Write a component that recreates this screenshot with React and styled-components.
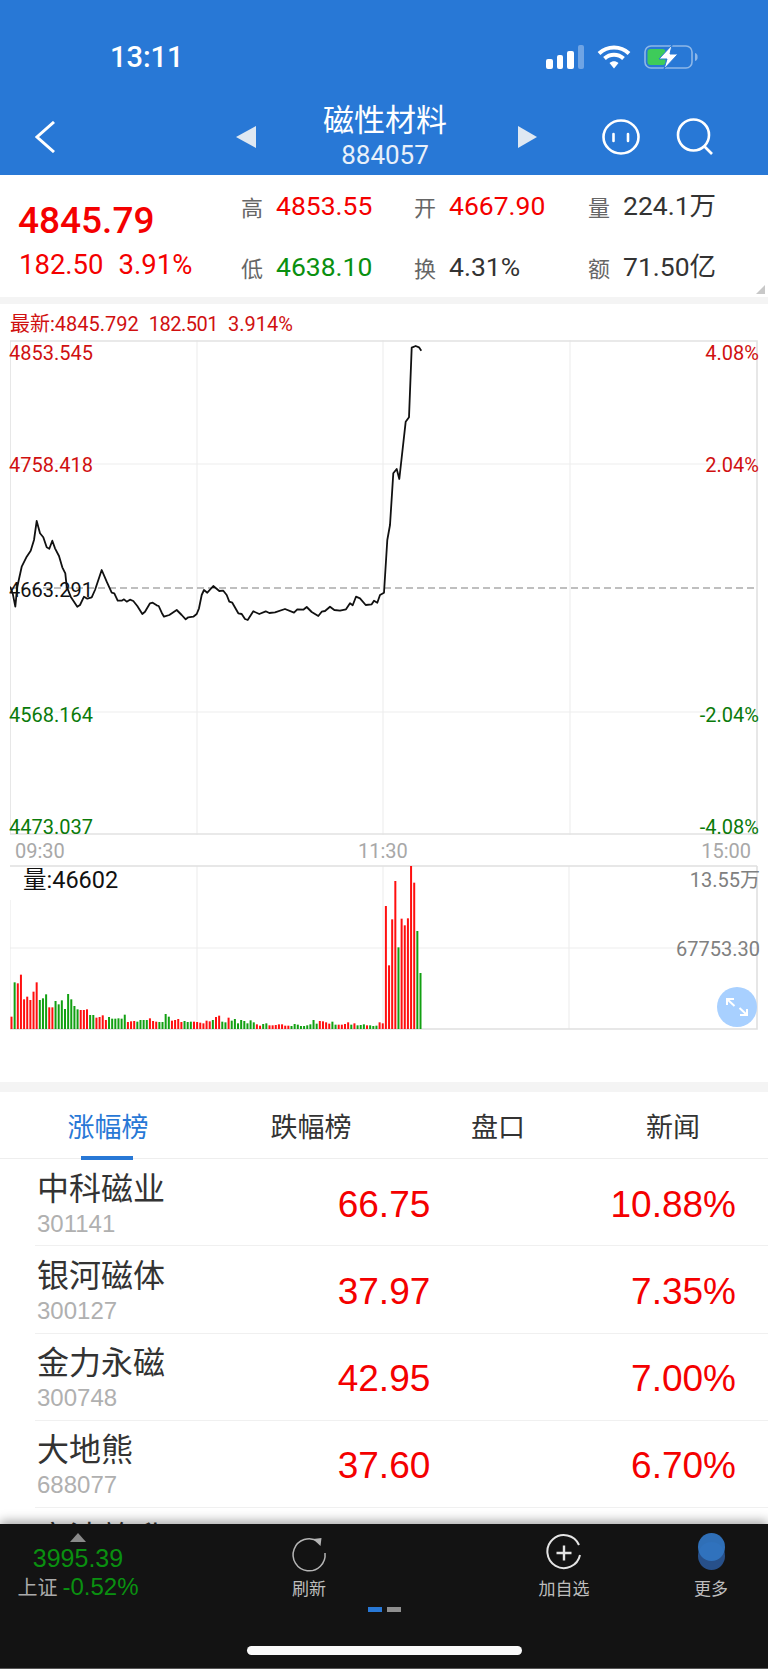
import React from "react";
import styled, { createGlobalStyle } from "styled-components";

const CJK = '"Noto Sans CJK SC", sans-serif';
const DIN = `Roboto, ${CJK}`;
const HELV = `"Liberation Sans", ${CJK}`;
const BLUE = "#2878d6";
const RED = "#f40000";
const GREEN = "#0a9010";

const LINE = [
  [30, 830], [38, 850], [46, 890], [52, 830], [65, 770], [80, 740], [92, 722], [102, 690], [110, 633], [120, 670],
  [130, 682], [140, 712], [148, 716], [157, 692], [165, 715], [177, 738], [187, 772], [196, 790], [200, 830], [212, 860],
  [232, 890], [240, 885], [252, 860], [262, 866], [275, 862], [285, 840], [305, 780], [320, 815], [335, 848], [343, 850],
  [353, 872], [365, 872], [372, 868], [380, 875], [390, 869], [400, 873], [412, 888], [427, 912], [435, 905], [450, 880],
  [458, 878], [470, 886], [476, 888], [485, 908], [492, 920], [508, 915], [530, 900], [545, 915], [557, 928], [565, 922],
  [580, 920], [590, 912], [597, 895], [605, 855], [612, 840], [622, 848], [640, 828], [658, 843], [670, 842], [680, 855],
  [688, 875], [697, 878], [715, 910], [725, 912], [735, 927], [743, 930], [760, 904], [778, 912], [797, 904], [808, 909],
  [825, 907], [855, 897], [882, 908], [892, 898], [910, 899], [920, 891], [935, 906], [955, 918], [965, 905], [975, 903],
  [990, 890], [1003, 900], [1020, 902], [1038, 898], [1050, 880], [1058, 886], [1068, 860], [1080, 865], [1097, 885], [1115, 883],
  [1122, 872], [1132, 878], [1140, 855], [1152, 848], [1162, 690], [1170, 645], [1180, 490], [1190, 477], [1198, 507], [1217, 335],
  [1227, 322], [1235, 113], [1247, 108], [1257, 112], [1264, 122],
]
  .map(([x, y]) => `${(x / 3).toFixed(1)},${(310 + y / 3).toFixed(1)}`)
  .join(" ");

// bar tops read off the reference, negative = green
const VOLUME = [
  590, -487, 490, 464, 538, 530, 540, 515, 487, -540, -535, -523, 562, 562, -543, -553, -541, -567, -522, -538, -558,
  -568, 570, 570, 568, -585, -585, 593, 591, 586, 600, -591, -596, -596, -595, -596, -584, 606, 604, 603, -605, -600,
  -600, -600, 595, 603, 605, -606, -606, -582, -590, 602, 600, 597, 606, -603, -606, -605, 605, 606, 608, 610, 602,
  604, -600, 591, 587, -605, -607, 593, -602, -597, -610, -600, -603, -610, -601, -607, 613, 617, -612, -610, 616, 616,
  615, 613, 613, 617, 617, -618, -612, -614, -618, -618, -616, -613, -600, -611, 603, 604, 607, 611, -605, -614, 614,
  614, 612, 607, -614, 610, -616, -615, -613, 616, -616, -618, -617, 607, 610,
  258, 436, 298, 183, -382, 296, 316, 295, 138, 188, -333, -459,
];

const STOCKS = [
  { name: "中科磁业", code: "301141", price: "66.75", pct: "10.88%" },
  { name: "银河磁体", code: "300127", price: "37.97", pct: "7.35%" },
  { name: "金力永磁", code: "300748", price: "42.95", pct: "7.00%" },
  { name: "大地熊", code: "688077", price: "37.60", pct: "6.70%" },
  { name: "宁波韵升", code: "600366", price: "12.45", pct: "6.41%" },
];

const App = () => (
  <Page>
    <GlobalStyle />
    <Header>
      <StatusBar>
        <Time>13:11</Time>
        <StatusIcons>
          <Signal>
            <SignalBar $h={10} />
            <SignalBar $h={14} />
            <SignalBar $h={18} />
            <SignalBar $h={24} $off />
          </Signal>
          <svg width="34" height="24" viewBox="0 0 34 24">
            <path d="M2 8.5C10.5 0.5 23.5 0.5 32 8.5" fill="none" stroke="#fff" strokeWidth="4" />
            <path d="M7.5 13.5C13 8.5 21 8.5 26.5 13.5" fill="none" stroke="#fff" strokeWidth="4" />
            <path d="M12.5 18C15.5 15.6 18.5 15.6 21.5 18L17 23.5Z" fill="#fff" />
          </svg>
          <svg width="54" height="24" viewBox="0 0 54 24">
            <rect x="1" y="1" width="47" height="22" rx="6" fill="none" stroke="#8db7e8" strokeWidth="1.6" />
            <rect x="3.5" y="4" width="18" height="16" rx="3" fill="#3ecb5a" />
            <path d="M51 8c2 .5 2.6 2 2.6 4s-.6 3.500-2.600 4z" fill="#8db7e8" />
            <path d="M28 0 15 14h8l-3 10 14-15h-8z" fill="#fff" stroke={BLUE} strokeWidth="1" />
          </svg>
        </StatusIcons>
      </StatusBar>
      <NavBar>
        <svg width="20" height="32" viewBox="0 0 20 32">
          <path d="M19 1 2 16l17 15" fill="none" stroke="#fff" strokeWidth="3" />
        </svg>
        <Arrow $left />
        <TitleBlock>
          <Title>磁性材料</Title>
          <Code>884057</Code>
        </TitleBlock>
        <Arrow />
        <FaceIcon width="38" height="36" viewBox="0 0 38 36">
          <ellipse cx="19" cy="18" rx="17.500" ry="16.500" fill="none" stroke="#fff" strokeWidth="2.600" />
          <path d="M11.500 15v7M26 15v7" stroke="#fff" strokeWidth="2.600" strokeLinecap="round" />
        </FaceIcon>
        <SearchIcon width="38" height="38" viewBox="0 0 38 38">
          <circle cx="17.500" cy="17" r="15.500" fill="none" stroke="#fff" strokeWidth="2.600" />
          <path d="M28 28l8 8" stroke="#fff" strokeWidth="2.600" />
        </SearchIcon>
      </NavBar>
    </Header>

    <Quote>
      <LastPrice>
        <Big>4845.79</Big>
        <Change>
          <span>182.50</span>
          <span>3.91%</span>
        </Change>
      </LastPrice>
      <Stats>
        <Stat label="高" value="4853.55" color={RED} />
        <Stat label="开" value="4667.90" color={RED} />
        <Stat label="量" value="224.1万" color="#333" />
        <Stat label="低" value="4638.10" color={GREEN} />
        <Stat label="换" value="4.31%" color="#333" />
        <Stat label="额" value="71.50亿" color="#333" />
      </Stats>
      <CornerMark />
    </Quote>
    <Band $h={7} />

    <ChartHeader>
      <span>最新:4845.792</span>
      <span>182.501</span>
      <span>3.914%</span>
    </ChartHeader>

    <PriceChart>
      <svg width="748" height="495" viewBox="10 340 748 495">
        <path d="M197 340V835M383 340V835M570 340V835M10 464H758M10 712H758" stroke="#eeeeee" strokeWidth="1.200" fill="none" />
        <path d="M10 341H757V834H10Z" stroke="#e2e2e2" strokeWidth="1.600" fill="none" />
        <path d="M10 588H758" stroke="#aaaaaa" strokeWidth="1.400" strokeDasharray="7 4" />
        <polyline points={LINE} fill="none" stroke="#111" strokeWidth="1.800" strokeLinejoin="round" />
      </svg>
      <AxisLabel $top={1} $color="#d01010">4853.545</AxisLabel>
      <AxisLabel $top={113} $color="#d01010">4758.418</AxisLabel>
      <AxisLabel $top={238} $color="#111">4663.291</AxisLabel>
      <AxisLabel $top={363} $color="#0a7a0a">4568.164</AxisLabel>
      <AxisLabel $top={475} $color="#0a7a0a">4473.037</AxisLabel>
      <AxisLabel $right $top={1} $color="#d01010">4.08%</AxisLabel>
      <AxisLabel $right $top={113} $color="#d01010">2.04%</AxisLabel>
      <AxisLabel $right $top={363} $color="#0a7a0a">-2.04%</AxisLabel>
      <AxisLabel $right $top={475} $color="#0a7a0a">-4.08%</AxisLabel>
    </PriceChart>

    <TimeAxis>
      <span>09:30</span>
      <MidTime>11:30</MidTime>
      <span>15:00</span>
    </TimeAxis>

    <VolumeChart>
      <svg width="748" height="165" viewBox="10 865 748 165">
        <path d="M197 866V1029M383 866V1029M569 866V1029M10 948H758" stroke="#eeeeee" strokeWidth="1.200" fill="none" />
        <path d="M757 866H10M757 866V1029H10" stroke="#e0e0e0" strokeWidth="1.600" fill="none" />
        <path d="M10 900V1029" stroke="#e8e8e8" strokeWidth="1" />
        {VOLUME.map((v, i) => {
          const top = 820 + Math.abs(v) / 3;
          return (
            <rect
              key={i}
              x={10.500 + (i * 409) / (VOLUME.length - 1)}
              y={top}
              width="2"
              height={1029 - top}
              fill={v < 0 ? "#12a012" : "#ff0f0f"}
            />
          );
        })}
      </svg>
      <VolumeTitle>量:46602</VolumeTitle>
      <VolumeLabel $top={3}>13.55万</VolumeLabel>
      <VolumeLabel $top={72}>67753.30</VolumeLabel>
      <ExpandButton>
        <svg width="26" height="26" viewBox="0 0 26 26">
          <path d="M3 11V5h7M3.500 5.500l7 6.500M23 15v6h-7M22.500 20.500l-7-6.500" fill="none" stroke="#fff" strokeWidth="2" />
        </svg>
      </ExpandButton>
    </VolumeChart>

    <Band $h={10} $top={52} />

    <Tabs>
      <Tab $active>
        <TabText $active>涨幅榜</TabText>
      </Tab>
      <Tab>
        <TabText>跌幅榜</TabText>
      </Tab>
      <Tab>
        <TabText>盘口</TabText>
      </Tab>
      <Tab>
        <TabText>新闻</TabText>
      </Tab>
    </Tabs>

    <List>
      {STOCKS.map((s) => (
        <Row key={s.code}>
          <div>
            <StockName>{s.name}</StockName>
            <StockCode>{s.code}</StockCode>
          </div>
          <Price>{s.price}</Price>
          <Pct>{s.pct}</Pct>
        </Row>
      ))}
    </List>

    <Footer>
      <ToolRow>
        <Market>
          <UpMark />
          <IndexPrice>3995.39</IndexPrice>
          <IndexRow>
            <IndexName>上证</IndexName>
            <IndexValue>-0.52%</IndexValue>
          </IndexRow>
        </Market>
        <Tool>
          <svg width="40" height="40" viewBox="0 0 40 40">
            <path d="M29 8.500A16 16 0 1 0 36 20" fill="none" stroke="#b5b5b5" strokeWidth="1.500" />
            <path d="M24 6l8.500-1-1 8z" fill="#b5b5b5" />
          </svg>
          <ToolLabel>刷新</ToolLabel>
        </Tool>
        <Tool>
          <svg width="40" height="40" viewBox="0 0 40 40">
            <path d="M36 22A16.500 16.500 0 1 1 35 12" fill="none" stroke="#e4e4e4" strokeWidth="2" />
            <path d="M20 12.500v15M12.500 20h15" stroke="#e4e4e4" strokeWidth="2.400" />
          </svg>
          <ToolLabel>加自选</ToolLabel>
        </Tool>
        <Tool>
          <MoreIcon />
          <ToolLabel>更多</ToolLabel>
        </Tool>
      </ToolRow>
      <Dots>
        <Dot $active />
        <Dot />
      </Dots>
      <HomeBar />
    </Footer>
  </Page>
);

const Stat = ({ label, value, color }) => (
  <StatCell>
    <StatLabel>{label}</StatLabel>
    <StatValue $color={color}>{value}</StatValue>
  </StatCell>
);

const GlobalStyle = createGlobalStyle`
  html, body {
    margin: 0;
    padding: 0;
    background: #fff;
  }
  * {
    box-sizing: border-box;
  }
  svg {
    display: block;
  }
`;

const Page = styled.div`
  width: 768px;
  height: 1669px;
  display: flex;
  flex-direction: column;
  overflow: hidden;
  font-family: ${DIN};
  background: #fff;
`;

const Header = styled.header`
  height: 175px;
  flex: none;
  background: ${BLUE};
  color: #fff;
`;

const StatusBar = styled.div`
  height: 90px;
  display: flex;
  align-items: center;
  justify-content: space-between;
  padding: 23px 70px 0 110px;
`;

const Time = styled.div`
  font-size: 29px;
  font-weight: 500;
  line-height: 30px;
`;

const StatusIcons = styled.div`
  display: flex;
  align-items: center;
  gap: 13px;
`;

const Signal = styled.div`
  display: flex;
  align-items: flex-end;
  gap: 4px;
  height: 24px;
`;

const SignalBar = styled.i`
  width: 6.500px;
  height: ${(p) => p.$h}px;
  border-radius: 2px;
  background: ${(p) => (p.$off ? "#6fa4e4" : "#fff")};
`;

const NavBar = styled.div`
  height: 85px;
  display: flex;
  align-items: center;
  padding: 9px 0 0 35px;
`;

const Arrow = styled.i`
  width: 0;
  height: 0;
  margin-left: ${(p) => (p.$left ? "181px" : "0")};
  border-top: 11px solid transparent;
  border-bottom: 11px solid transparent;
  ${(p) =>
    p.$left
      ? "border-right: 20px solid #dfe8f2;"
      : "border-left: 19px solid #dfe8f2;"}
`;

const TitleBlock = styled.div`
  width: 262px;
  margin-top: -6px;
  padding-right: 4px;
  display: flex;
  flex-direction: column;
  align-items: center;
`;

const Title = styled.div`
  font-family: ${CJK};
  font-size: 31px;
  line-height: 38px;
`;

const Code = styled.div`
  margin-top: 3px;
  font-size: 26px;
  line-height: 30px;
  color: #e8f0fa;
`;

const FaceIcon = styled.svg`
  margin-left: 65px;
`;

const SearchIcon = styled.svg`
  margin-left: 36px;
`;

const Quote = styled.section`
  height: 122px;
  flex: none;
  position: relative;
  display: flex;
  padding-left: 18px;
`;

const LastPrice = styled.div`
  width: 223px;
  padding-top: 25px;
  color: ${RED};
`;

const Big = styled.div`
  font-size: 37px;
  font-weight: 500;
  line-height: 42px;
  color: ${RED};
`;

const Change = styled.div`
  display: flex;
  gap: 15px;
  margin-top: 7px;
  padding-left: 1px;
  font-size: 27.500px;
  line-height: 32px;
`;

const Stats = styled.div`
  display: grid;
  grid-template-columns: 173px 174px auto;
  grid-auto-rows: 61px;
  padding-top: 12px;
`;

const StatCell = styled.div`
  display: flex;
  align-items: flex-start;
  gap: 13px;
`;

const StatLabel = styled.span`
  font-family: ${CJK};
  font-size: 22px;
  line-height: 38px;
  color: #666;
`;

const StatValue = styled.span`
  font-size: 26.500px;
  line-height: 38px;
  color: ${(p) => p.$color};
`;

const CornerMark = styled.i`
  position: absolute;
  right: 3px;
  bottom: 3px;
  width: 0;
  height: 0;
  border-left: 9px solid transparent;
  border-bottom: 9px solid #c8c8c8;
`;

const Band = styled.div`
  height: ${(p) => p.$h}px;
  flex: none;
  margin-top: ${(p) => p.$top || 0}px;
  background: #f4f4f4;
`;

const ChartHeader = styled.div`
  height: 36px;
  flex: none;
  display: flex;
  gap: 10px;
  padding: 8px 0 0 10px;
  font-size: 20px;
  line-height: 24px;
  color: #d01010;

  span:nth-child(2) {
    letter-spacing: -0.5px;
  }
`;

const PriceChart = styled.div`
  position: relative;
  width: 748px;
  height: 495px;
  flex: none;
  margin-left: 10px;
`;

const AxisLabel = styled.span`
  position: absolute;
  top: ${(p) => p.$top}px;
  ${(p) => (p.$right ? "right: -1px;" : "left: -1px;")}
  font-size: 20px;
  line-height: 24px;
  color: ${(p) => p.$color};
`;

const TimeAxis = styled.div`
  height: 30px;
  flex: none;
  position: relative;
  display: flex;
  justify-content: space-between;
  padding: 4px 17px 0 15px;
  font-size: 20px;
  line-height: 24px;
  color: #a8a8a8;
`;

const MidTime = styled.span`
  position: absolute;
  left: 358px;
`;

const VolumeChart = styled.div`
  position: relative;
  width: 748px;
  height: 165px;
  flex: none;
  margin-left: 10px;
`;

const VolumeTitle = styled.span`
  position: absolute;
  top: 2px;
  left: 13px;
  font-size: 23.500px;
  line-height: 26px;
  color: #111;
`;

const VolumeLabel = styled.span`
  position: absolute;
  top: ${(p) => p.$top}px;
  right: -2px;
  font-size: 20px;
  line-height: 24px;
  color: #808080;
`;

const ExpandButton = styled.div`
  position: absolute;
  top: 122px;
  right: 1px;
  width: 40px;
  height: 40px;
  display: flex;
  align-items: center;
  justify-content: center;
  border-radius: 50%;
  background: #a8d0ff;
`;

const Tabs = styled.nav`
  height: 67px;
  flex: none;
  display: grid;
  grid-template-columns: 216px 190px 184px 166px;
  border-bottom: 1px solid #eeeeee;
`;

const Tab = styled.div`
  display: flex;
  justify-content: center;
`;

const TabText = styled.span`
  position: relative;
  font-family: ${CJK};
  font-size: 27px;
  line-height: 38px;
  padding-top: 15px;
  height: 67px;
  color: ${(p) => (p.$active ? BLUE : "#333")};

  ${(p) =>
    p.$active &&
    `&::after {
      content: "";
      position: absolute;
      left: 13px;
      right: 16px;
      bottom: -1px;
      height: 4px;
      background: ${BLUE};
    }`}
`;

const List = styled.div`
  flex: 1;
  min-height: 0;
  overflow: hidden;
`;

const Row = styled.div`
  height: 87.250px;
  margin-left: 35px;
  padding: 0 32px 0 2px;
  display: grid;
  grid-template-columns: 263px 168px 1fr;
  align-items: center;
  border-bottom: 1px solid #f0f0f0;
`;

const StockName = styled.div`
  font-family: ${CJK};
  font-size: 32px;
  line-height: 36px;
  color: #333;
`;

const StockCode = styled.div`
  margin-top: 7px;
  font-family: ${HELV};
  font-size: 24px;
  line-height: 26px;
  color: #b0b0b0;
`;

const Price = styled.div`
  padding-top: 5px;
  font-family: ${HELV};
  font-size: 37px;
  text-align: center;
  color: ${RED};
`;

const Pct = styled(Price)`
  text-align: right;
`;

const Footer = styled.footer`
  height: 145px;
  flex: none;
  position: relative;
  background: #131313;
  box-shadow: 0 -3px 10px rgba(0, 0, 0, 0.35);
  border-bottom: 1px solid #555;
`;

const ToolRow = styled.div`
  display: grid;
  grid-template-columns: 156px 306px 204px 90px;
  height: 83px;
  padding-top: 9px;
`;

const Market = styled.div`
  display: flex;
  flex-direction: column;
  align-items: center;
`;

const UpMark = styled.i`
  width: 0;
  height: 0;
  margin-bottom: 4px;
  border-left: 8px solid transparent;
  border-right: 8px solid transparent;
  border-bottom: 9px solid #8a8a8a;
`;

const IndexValue = styled.span`
  font-family: ${HELV};
  font-size: 24px;
  line-height: 24px;
  color: ${GREEN};
`;

const IndexPrice = styled(IndexValue)`
  font-size: 25px;
`;

const IndexRow = styled.div`
  display: flex;
  align-items: center;
  gap: 5px;
  margin-top: 5px;
`;

const IndexName = styled.span`
  font-family: ${CJK};
  font-size: 20px;
  line-height: 24px;
  color: #aaa;
`;

const Tool = styled.div`
  display: flex;
  flex-direction: column;
  align-items: center;
  gap: 5px;
`;

const MoreIcon = styled.i`
  position: relative;
  width: 27px;
  height: 40px;

  &::before,
  &::after {
    content: "";
    position: absolute;
    left: 0;
    width: 27px;
    height: 28px;
    border-radius: 50%;
  }
  &::before {
    top: 9px;
    background: #27508a;
  }
  &::after {
    top: 0;
    background: rgba(48, 116, 192, 0.95);
  }
`;

const ToolLabel = styled.span`
  font-family: ${CJK};
  font-size: 17px;
  line-height: 20px;
  color: #bdbdbd;
`;

const Dots = styled.div`
  display: flex;
  justify-content: center;
  gap: 5px;
`;

const Dot = styled.i`
  width: 14px;
  height: 5px;
  background: ${(p) => (p.$active ? BLUE : "#8f8f8f")};
`;

const HomeBar = styled.div`
  width: 275px;
  height: 9px;
  margin: 34px 0 0 247px;
  border-radius: 5px;
  background: #fafafa;
`;

export default App;
